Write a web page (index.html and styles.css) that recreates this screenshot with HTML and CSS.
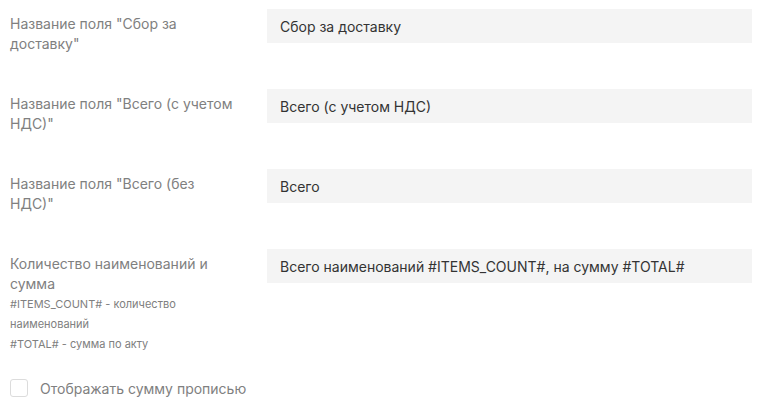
FILE: index.html
```html
<!DOCTYPE html>
<html lang="ru">
<head>
    <meta charset="UTF-8">
    <meta name="viewport" content="width=device-width, initial-scale=1.0">
    <title>Настройки акта</title>
    <link rel="stylesheet" href="styles.css">
</head>
<body>

<div class="form">
    <div class="row">
        <label class="label" for="f-delivery">Название поля "Сбор за доставку"</label>
        <input class="field" type="text" id="f-delivery" value="Сбор за доставку">
    </div>

    <div class="row">
        <label class="label" for="f-total-vat">Название поля "Всего (с учетом НДС)"</label>
        <input class="field" type="text" id="f-total-vat" value="Всего (с учетом НДС)">
    </div>

    <div class="row">
        <label class="label" for="f-total">Название поля "Всего (без НДС)"</label>
        <input class="field" type="text" id="f-total" value="Всего">
    </div>

    <div class="row">
        <label class="label" for="f-count">
            Количество наименований и сумма
            <span class="hint">#ITEMS_COUNT# - количество наименований</span>
            <span class="hint">#TOTAL# - сумма по акту</span>
        </label>
        <input class="field" type="text" id="f-count" value="Всего наименований #ITEMS_COUNT#, на сумму #TOTAL#">
    </div>

    <label class="check">
        <input type="checkbox" class="check-input">
        <span class="check-box"></span>
        <span class="check-text">Отображать сумму прописью</span>
    </label>
</div>

</body>
</html>
```

FILE: styles.css
```css
body {
    font-family: Inter, "Noto Sans", sans-serif;
    background-color: #ffffff;
    margin: 0;
    padding: 9px 11px 0 10px;
}
.row {
    display: grid;
    grid-template-columns: 257px 1fr;
    align-items: start;
    min-height: 80px;
}
.label {
    padding-top: 5px;
    padding-right: 30px;
    font-size: 14px;
    line-height: 20px;
    color: #808080;
}
.hint {
    display: block;
    font-size: 11px;
    line-height: 20px;
}
.field {
    height: 34px;
    box-sizing: border-box;
    padding: 0 13px;
    border: none;
    border-radius: 0;
    background-color: #f4f4f4; /* light grey input */
    font-family: inherit;
    font-size: 14px;
    color: #333333;
    outline: none;
}
.check {
    display: flex;
    align-items: center;
    gap: 12px;
    margin-top: 20px;
    height: 28px;
    cursor: pointer;
}
.check-input {
    display: none;
}
.check-box {
    width: 18px;
    height: 18px;
    box-sizing: border-box;
    border: 1px solid #dcdcdc;
    border-radius: 3px;
    background-color: #fff;
}
.check-text {
    font-size: 14px;
    color: #808080;
}
```
